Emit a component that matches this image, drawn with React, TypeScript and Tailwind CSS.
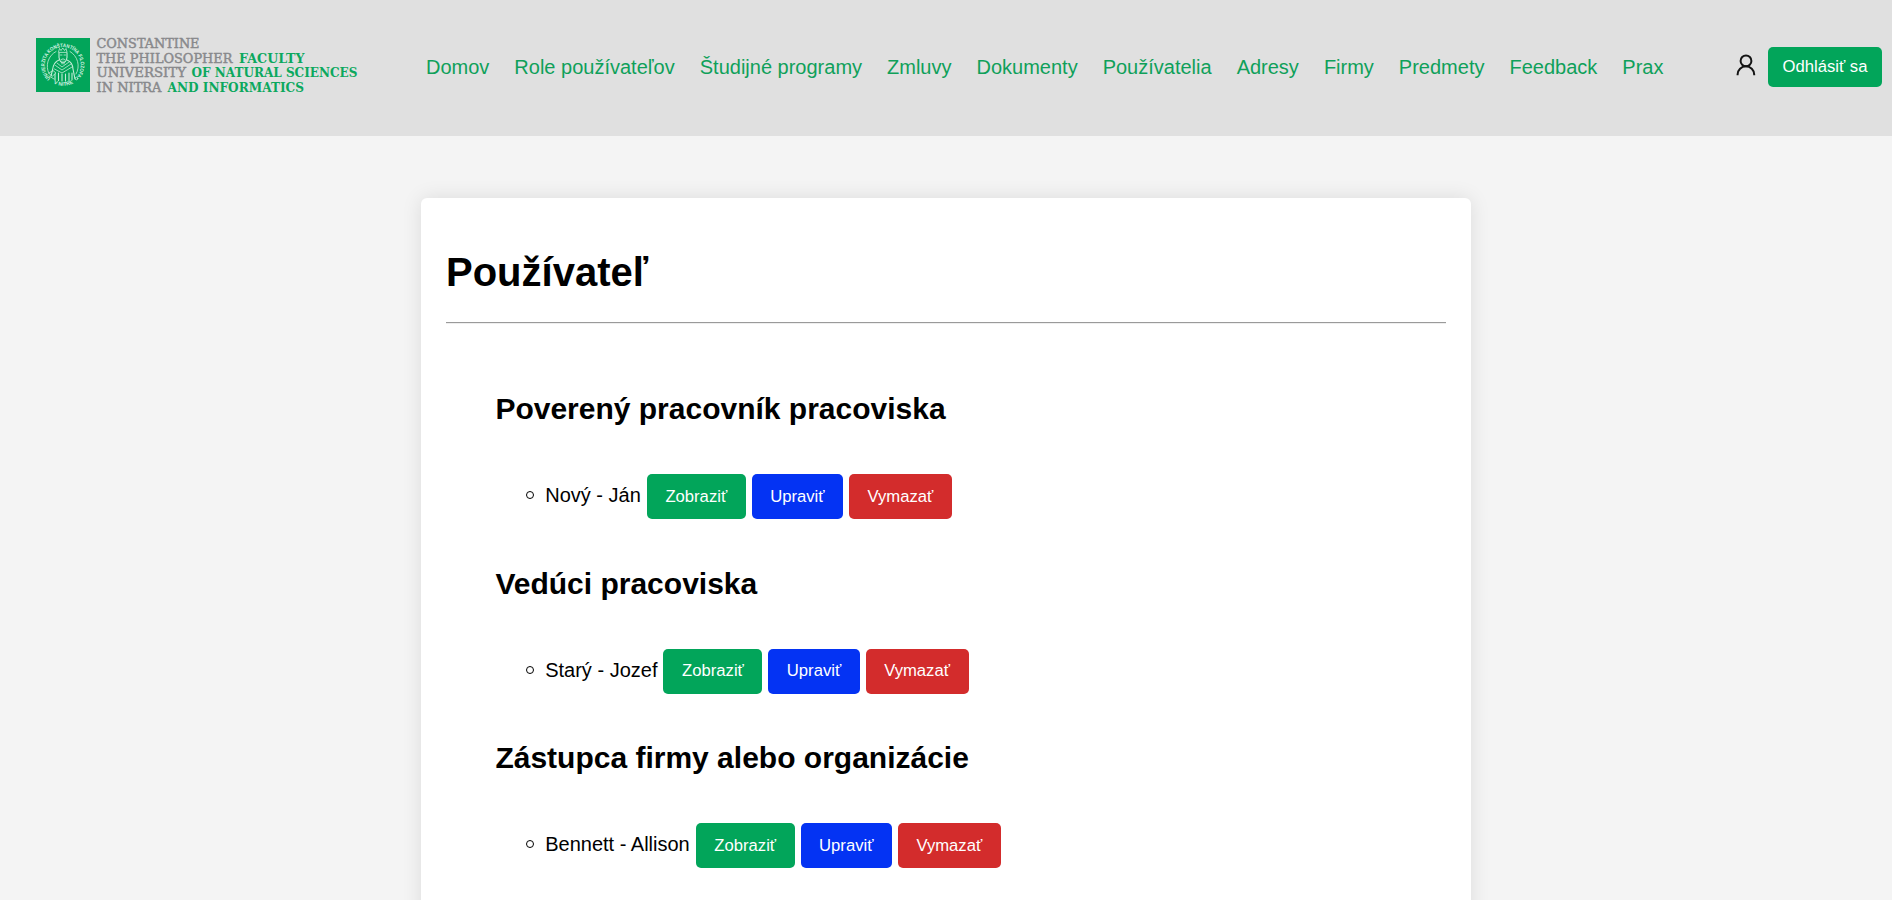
import React from "react";

const NAV = [
  "Domov",
  "Role používateľov",
  "Študijné programy",
  "Zmluvy",
  "Dokumenty",
  "Používatelia",
  "Adresy",
  "Firmy",
  "Predmety",
  "Feedback",
  "Prax",
];

const GROUPS = [
  { title: "Poverený pracovník pracoviska", user: "Nový - Ján" },
  { title: "Vedúci pracoviska", user: "Starý - Jozef" },
  { title: "Zástupca firmy alebo organizácie", user: "Bennett - Allison" },
];

function Logo() {
  return (
    <svg
      className="h-[60px] w-[324px] shrink-0"
      viewBox="0 0 324 60"
      fontFamily="'DejaVu Serif', serif"
      fontSize="12.8"
    >
      <rect x="0" y="2" width="54" height="54" fill="#02a55a" />
      <defs>
        <path id="seal-top" d="M14.6 42.5 A18 18 0 1 1 41.5 39.5" />
        <path id="seal-bottom" d="M15 46 A22.6 22.6 0 0 0 40 46" />
      </defs>
      <g fill="#d5f3e3" fontFamily="'Liberation Sans', sans-serif" fontSize="5.2" fontWeight="700">
        <text>
          <textPath href="#seal-top" textLength="83" lengthAdjust="spacingAndGlyphs">
            UNIVERZITA KONŠTANTÍNA FILOZOFA
          </textPath>
        </text>
        <text>
          <textPath href="#seal-bottom" startOffset="3">V NITRE</textPath>
        </text>
      </g>
      <g fill="none" stroke="#c4ecd7" strokeWidth="0.8" strokeLinecap="round">
        <path d="M20 15.500 A16.300 16.300 0 0 0 13 37.500 M34 15.500 A16.300 16.300 0 0 1 40 38" />
        <circle cx="40.500" cy="42.500" r="1.300" />
        <path d="M22.500 16 L23.500 12.500 L25 14.500 L26.800 12 L28.500 14.500 L30 12.500 L31 16 Z" />
        <path d="M23 17 V21.500 Q24 26.500 27 27 Q30 26.500 31 21.500 V17" strokeWidth="1.100" />
        <path d="M24.500 19 H26 M28 19 H29.500 M25 23.500 Q27 22 29 23.500 M26 25 V28 M28 25 V28" />
        <path d="M23 24 Q17.500 26 16.500 34 L15 40 M31 24 Q36.500 26 37 33 L39 43" strokeWidth="1.100" />
        <path d="M21 27 L26 31 L33 26 M19.500 29.500 L26 34 L35 28 M18.500 33 L26 37 L36 31" />
        <path d="M19 38 V44 M22.500 37 V44.500 M26 38 V45 M29.500 38 V45 M33 37 V44.500 M36 37 V43.500" strokeWidth="1.100" />
        <path d="M13 37 L17 34.500 L20 37 L16.500 40 Z M13 40 L18 43" />
      </g>
      <g fill="#88898c" stroke="#88898c" strokeWidth="0.45">
        <text x="60.500" y="11.900" textLength="103" lengthAdjust="spacingAndGlyphs">CONSTANTINE</text>
        <text x="60.500" y="26.500" textLength="136" lengthAdjust="spacingAndGlyphs">THE PHILOSOPHER</text>
        <text x="60.500" y="41.100" textLength="89.500" lengthAdjust="spacingAndGlyphs">UNIVERSITY</text>
        <text x="60.500" y="55.700" textLength="65" lengthAdjust="spacingAndGlyphs">IN NITRA</text>
      </g>
      <g fill="#0ca85e" fontWeight="700">
        <text x="203" y="26.500" textLength="65.500" lengthAdjust="spacingAndGlyphs">FACULTY</text>
        <text x="155.500" y="41.100" textLength="166" lengthAdjust="spacingAndGlyphs">OF NATURAL SCIENCES</text>
        <text x="131.500" y="55.700" textLength="136.500" lengthAdjust="spacingAndGlyphs">AND INFORMATICS</text>
      </g>
    </svg>
  );
}

function PersonIcon() {
  return (
    <svg className="h-6 w-6" viewBox="0 0 24 24" fill="none" stroke="#141414" strokeWidth="2">
      <circle cx="12" cy="7.900" r="5.400" />
      <path d="M3.600 22.300 V21.500 A8.300 8.200 0 0 1 20.200 21.500 V22.300" />
    </svg>
  );
}

const ACTION =
  "h-[45px] shrink-0 rounded-[5px] text-center text-[16.67px] leading-[44px] text-white";

export default function App() {
  return (
    <div className="h-[900px] overflow-hidden bg-[#f4f4f4] font-['Liberation_Sans',Arial,sans-serif] text-xl text-black">
      <header className="flex h-[136px] bg-[#e0e0e0] pl-9 pr-2.5">
        <div className="pt-9">
          <Logo />
        </div>
        <nav className="ml-[66px] flex gap-[25px] pt-[55px] leading-6 text-[#0fa05a]">
          {NAV.map((label) => (
            <a key={label} href="#" className="whitespace-nowrap">
              {label}
            </a>
          ))}
        </nav>
        <div className="ml-auto flex items-start pt-[47px]">
          <a href="#" className="mr-[10px] mt-[6px]">
            <PersonIcon />
          </a>
          <button className="h-10 w-[114px] rounded-[5px] bg-[#02a55a] text-[16.67px] leading-[40px] text-white">
            Odhlásiť sa
          </button>
        </div>
      </header>

      <main className="mx-auto mt-[62px] h-[900px] w-[1050px] rounded-[6px] bg-white px-[25px] pt-[50px] shadow-[0_0_20px_rgba(0,0,0,0.1)]">
        <h1 className="text-[40px] font-bold leading-[48px]">Používateľ</h1>
        <div className="mt-[26px] h-0.5 border-b border-t border-b-[#eeeeee] border-t-[#9a9a9a]" />
        <ul className="pl-[49.4px] pt-[67px]">
          {GROUPS.map(({ title, user }) => (
            <li key={title} className="h-[174.5px]">
              <h2 className="text-[30px] font-bold leading-9">{title}</h2>
              <div className="mt-[47px] flex pl-[30.8px]">
                <span className="mr-[11px] mt-[17px] h-2 w-2 rounded-full border border-black" />
                <span className="mr-[6px] mt-[9px] whitespace-nowrap leading-6">{user}</span>
                <span className="flex gap-[5.8px]">
                  <button className={`${ACTION} w-[99px] bg-[#02a55a]`}>Zobraziť</button>
                  <button className={`${ACTION} w-[91.5px] bg-[#0433f3]`}>Upraviť</button>
                  <button className={`${ACTION} w-[103px] bg-[#d32c2c]`}>Vymazať</button>
                </span>
              </div>
            </li>
          ))}
        </ul>
      </main>
    </div>
  );
}
